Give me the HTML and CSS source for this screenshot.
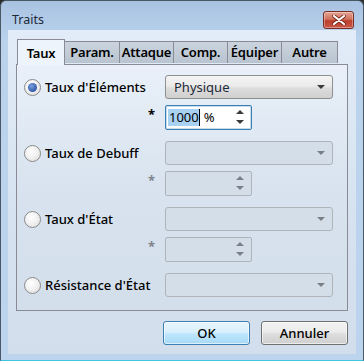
FILE: index.html
```html
<!DOCTYPE html>
<html lang="fr">
<head>
    <meta charset="UTF-8">
    <title>Traits</title>
    <link rel="stylesheet" href="styles.css">
</head>
<body>
    <div class="window">
        <div class="titlebar">
            <span class="title">Traits</span>
            <button class="close-btn" aria-label="Fermer">
                <svg width="14" height="10" viewBox="0 0 14 10">
                    <path d="M2 1 L12 9 M12 1 L2 9" stroke="#6b1d12" stroke-width="3.6" stroke-linecap="round"/>
                    <path d="M2 1 L12 9 M12 1 L2 9" stroke="#fff" stroke-width="2.2" stroke-linecap="round"/>
                </svg>
            </button>
        </div>
        <div class="client">
            <div class="tabs">
                <div class="tab active">Taux</div>
                <div class="tab">Param.</div>
                <div class="tab">Attaque</div>
                <div class="tab">Comp.</div>
                <div class="tab">Équiper</div>
                <div class="tab">Autre</div>
            </div>
            <div class="panel">
                <div class="group">
                    <label class="radio-row">
                        <span class="radio checked"></span>
                        <span>Taux d'Éléments</span>
                    </label>
                    <div class="select">
                        <span>Physique</span>
                        <span class="arrow"></span>
                    </div>
                    <span class="star">*</span>
                    <div class="spin focus">
                        <span class="value"><span class="selected">1000</span><span class="caret"></span>%</span>
                        <span class="spin-arrows"><span class="up"></span><span class="down"></span></span>
                    </div>
                </div>
                <div class="group disabled">
                    <label class="radio-row">
                        <span class="radio"></span>
                        <span>Taux de Debuff</span>
                    </label>
                    <div class="select">
                        <span></span>
                        <span class="arrow"></span>
                    </div>
                    <span class="star">*</span>
                    <div class="spin">
                        <span class="value"></span>
                        <span class="spin-arrows"><span class="up"></span><span class="down"></span></span>
                    </div>
                </div>
                <div class="group disabled">
                    <label class="radio-row">
                        <span class="radio"></span>
                        <span>Taux d'État</span>
                    </label>
                    <div class="select">
                        <span></span>
                        <span class="arrow"></span>
                    </div>
                    <span class="star">*</span>
                    <div class="spin">
                        <span class="value"></span>
                        <span class="spin-arrows"><span class="up"></span><span class="down"></span></span>
                    </div>
                </div>
                <div class="group disabled single">
                    <label class="radio-row">
                        <span class="radio"></span>
                        <span>Résistance d'État</span>
                    </label>
                    <div class="select">
                        <span></span>
                        <span class="arrow"></span>
                    </div>
                </div>
            </div>
            <div class="buttons">
                <button class="btn default">OK</button>
                <button class="btn">Annuler</button>
            </div>
        </div>
    </div>
</body>
</html>
```

FILE: styles.css
```css
body {
    margin: 0;
    padding: 0;
    background-color: #2b2b2b;
    font-family: "Noto Sans", "Open Sans", sans-serif;
    font-size: 13px;
    color: #000;
}
.window {
    width: 362px;
    height: 359px;
    border: 1px solid #4a5866;
    border-radius: 6px 6px 0 0;
    border-bottom-color: #3ec6e0;
    background: linear-gradient(#a8c3e2, #bad2ec 40px, #bcd4ed);
    display: flex;
    flex-direction: column;
    overflow: hidden;
}
.titlebar {
    height: 29px;
    display: flex;
    align-items: center;
    justify-content: space-between;
    padding: 0 9px 0 11px;
}
.title {
    color: #1e2a38;
    font-size: 12.5px;
    margin-top: 7px;
}
.close-btn {
    width: 31px;
    height: 18px;
    margin-top: 8px;
    padding: 0;
    border: 1px solid #7a2d24;
    border-radius: 3px;
    background: linear-gradient(#e6a593, #d0705d 45%, #bd3d2b 55%, #c8584a);
    box-shadow: inset 0 0 0 1px rgba(255, 255, 255, 0.35);
    display: flex;
    align-items: center;
    justify-content: center;
}
.client {
    margin: 0 7px 6px 7px;
    flex: 1;
    background: linear-gradient(#e2ecf8, #d6e2ef 60%, #d2deeb);
    padding: 8px 7px 0 8px;
    display: flex;
    flex-direction: column;
}
.tabs {
    display: flex;
    align-items: flex-end;
    height: 26px;
    padding-left: 1px;
    position: relative;
    z-index: 1;
}
.tab {
    width: 54px;
    height: 22px;
    box-sizing: border-box;
    border: 1px solid #898c95;
    border-bottom: none;
    border-left: none;
    background: linear-gradient(#cbd4de, #b9c4d0);
    font-weight: 600;
    text-align: center;
    line-height: 21px;
    margin-bottom: 1px;
    white-space: nowrap;
    letter-spacing: -0.2px;
}
.tab.active {
    width: 48px;
    height: 26px;
    border-left: 1px solid #898c95;
    background: #eef4fb;
    margin-bottom: -1px;
    line-height: 26px;
    padding-bottom: 2px;
}
.tab:nth-child(2) {
    width: 55px;
}
.tab:last-child {
    width: 56px;
}
.panel {
    width: 332px;
    height: 247px;
    box-sizing: border-box;
    border: 1px solid #898c95;
    background: linear-gradient(#e9f0f9, #d8e3ef 50%, #d3deeb);
    padding: 10px 0 0 7px;
    display: flex;
    flex-direction: column;
    gap: 12px;
}
.group {
    display: grid;
    grid-template-columns: 141px 87px 81px;
    grid-template-rows: 24px 24px;
    row-gap: 6px;
    align-items: center;
}
.group.single {
    grid-template-rows: 24px;
}
.radio-row {
    display: flex;
    align-items: center;
    gap: 4px;
    font-weight: 500;
    white-space: nowrap;
}
.radio {
    width: 17px;
    height: 17px;
    flex: none;
    border: 1px solid #8a8a8a;
    border-radius: 50%;
    background: radial-gradient(circle at 40% 35%, #ffffff, #f0f0f0 50%, #d8d8d8);
    box-sizing: border-box;
    display: flex;
    align-items: center;
    justify-content: center;
}
.radio.checked::after {
    content: "";
    width: 9px;
    height: 9px;
    border-radius: 50%;
    background: radial-gradient(circle at 40% 35%, #7aa2e0, #3a62b0 60%, #2a4f96);
}
.select {
    grid-column: 2 / 4;
    width: 168px;
    height: 24px;
    box-sizing: border-box;
    border: 1px solid #8e8f8f;
    border-radius: 3px;
    background: linear-gradient(#f4f4f4, #ebebeb 45%, #dddddd 55%, #cfcfcf);
    display: flex;
    align-items: center;
    justify-content: space-between;
    padding: 0 7px 0 8px;
    color: #1e2a38;
}
.arrow {
    width: 0;
    height: 0;
    border-left: 4px solid transparent;
    border-right: 4px solid transparent;
    border-top: 4px solid #3a3a3a;
}
.star {
    justify-self: end;
    margin-right: 10px;
    font-weight: 700;
    align-self: start;
    line-height: 18px;
}
.spin {
    width: 87px;
    height: 25px;
    box-sizing: border-box;
    border: 1px solid #abadb3;
    border-radius: 2px;
    background: #fff;
    display: flex;
    align-items: center;
    justify-content: space-between;
    padding: 0 7px 0 2px;
}
.spin.focus {
    border-color: #3c7fb1;
    box-shadow: inset 0 0 0 1px #c5dcee;
}
.value {
    display: flex;
    align-items: center;
    height: 17px;
    line-height: 17px;
}
.selected {
    background: #a8d1f2;
    padding-left: 1px;
}
.caret {
    width: 1px;
    height: 17px;
    background: #000;
    margin-right: 4px;
}
.spin-arrows {
    display: flex;
    flex-direction: column;
    gap: 6px;
}
.up, .down {
    width: 0;
    height: 0;
    border-left: 4px solid transparent;
    border-right: 4px solid transparent;
}
.up {
    border-bottom: 4px solid #3a3a3a;
}
.down {
    border-top: 4px solid #3a3a3a;
}
.disabled .select {
    background: #d4dee9;
    border-color: #aeb4ba;
}
.disabled .arrow {
    border-top-color: #7a7f85;
}
.disabled .star {
    color: #7f858c;
}
.disabled .spin {
    background: #d4dee9;
    border-color: #aeb4ba;
}
.disabled .up {
    border-bottom-color: #7a7f85;
}
.disabled .down {
    border-top-color: #7a7f85;
}
.buttons {
    display: flex;
    justify-content: flex-end;
    gap: 11px;
    padding: 10px 1px 0 0;
}
.btn {
    width: 87px;
    height: 24px;
    font-family: inherit;
    font-size: 13px;
    font-weight: 500;
    color: #000;
    border: 1px solid #707070;
    border-radius: 3px;
    background: linear-gradient(#f2f2f2, #ebebeb 45%, #dddddd 55%, #cfcfcf);
    box-shadow: inset 0 0 0 1px rgba(255, 255, 255, 0.6);
}
.btn.default {
    border-color: #3c7fb1;
    background: linear-gradient(#eaf5fd, #d9f0fc 45%, #bee6fd 55%, #a7d9f5);
}
```
